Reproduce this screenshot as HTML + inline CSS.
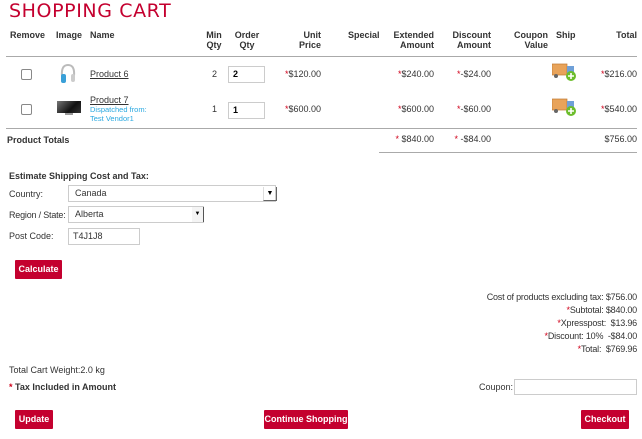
<!DOCTYPE html>
<html><head><style>
body{margin:0;width:642px;height:439px;background:#fff;font-family:"Liberation Sans",Arial,sans-serif;font-size:9px;color:#333;position:relative;overflow:hidden}
.a{position:absolute;white-space:nowrap}
.b{font-weight:bold}
.r{text-align:right}
.c{text-align:center}
.s{color:#d0021b}
.btn{position:absolute;background:#c4002f;color:#fff;font-weight:bold;font-size:9px;text-align:center;border-radius:1px}
.inp{position:absolute;border:1px solid #ccc;background:#fff;box-sizing:border-box;padding-left:4px;font-size:9px}
.cb{position:absolute;width:11px;height:11px;border:1px solid #888;border-radius:2px;box-sizing:border-box}
.line{position:absolute;height:1px;background:#aaa}
u{text-decoration:underline}
</style></head><body>
<div class="a" style="left:9px;top:0px;font-family:'DejaVu Sans',sans-serif;font-size:19px;color:#c4002f;letter-spacing:0.6px">SHOPPING CART</div>

<div class="a b" style="left:10px;top:30px">Remove</div>
<div class="a b" style="left:56px;top:30px">Image</div>
<div class="a b" style="left:90px;top:30px">Name</div>
<div class="a b c" style="left:200px;top:30px;width:28px;line-height:10px">Min<br>Qty</div>
<div class="a b c" style="left:228px;top:30px;width:38px;line-height:10px">Order<br>Qty</div>
<div class="a b r" style="left:280px;top:30px;width:41px;line-height:10px">Unit<br>Price</div>
<div class="a b" style="left:348px;top:30px">Special</div>
<div class="a b r" style="left:380px;top:30px;width:54px;line-height:10px">Extended<br>Amount</div>
<div class="a b r" style="left:440px;top:30px;width:51px;line-height:10px">Discount<br>Amount</div>
<div class="a b r" style="left:510px;top:30px;width:38px;line-height:10px">Coupon<br>Value</div>
<div class="a b" style="left:556px;top:30px">Ship</div>
<div class="a b r" style="left:600px;top:30px;width:37px">Total</div>
<div class="line" style="left:6px;top:56px;width:631px"></div>

<div class="cb" style="left:21px;top:69px"></div>
<svg class="a" style="left:58px;top:62px" width="20" height="24" viewBox="0 0 20 24"><path d="M4 14 Q3 3 10 3 Q17 3 16 14" fill="none" stroke="#bbb" stroke-width="2"/><rect x="3" y="12" width="5" height="9" rx="2" fill="#3aa0d8"/><rect x="13" y="12" width="4" height="8" rx="2" fill="#ccc"/></svg>
<div class="a" style="left:90px;top:69px"><u>Product 6</u></div>
<div class="a r" style="left:200px;top:69px;width:17px">2</div>
<div class="inp b" style="left:228px;top:66px;width:37px;height:17px;line-height:15px;color:#000">2</div>
<div class="a r" style="left:270px;top:69px;width:51px"><span class="s">*</span>$120.00</div>
<div class="a r" style="left:380px;top:69px;width:54px"><span class="s">*</span>$240.00</div>
<div class="a r" style="left:440px;top:69px;width:51px"><span class="s">*</span>-$24.00</div>
<svg class="a" style="left:552px;top:62px" width="26" height="20" viewBox="0 0 26 20"><rect x="0" y="2" width="15" height="11" fill="#e8a35a" stroke="#c07830" stroke-width=".7"/><rect x="15" y="4" width="7" height="9" fill="#6fa0d8"/><circle cx="4" cy="14" r="2" fill="#666"/><circle cx="19" cy="14" r="5" fill="#6cbd2c"/><path d="M19 11v6M16 14h6" stroke="#fff" stroke-width="1.6"/></svg>
<div class="a r" style="left:590px;top:69px;width:47px"><span class="s">*</span>$216.00</div>

<div class="cb" style="left:21px;top:104px"></div>
<div class="a" style="left:57px;top:101px;width:24px;height:12px;background:linear-gradient(135deg,#777,#111 60%,#333)"></div>
<div class="a" style="left:65px;top:113px;width:8px;height:2px;background:#999"></div>
<div class="a" style="left:90px;top:95px"><u>Product 7</u></div>
<div class="a" style="left:90px;top:105px;font-size:7.5px;color:#29a8e0;line-height:9px">Dispatched from:<br>Test Vendor1</div>
<div class="a r" style="left:200px;top:104px;width:17px">1</div>
<div class="inp b" style="left:228px;top:102px;width:37px;height:17px;line-height:15px;color:#000">1</div>
<div class="a r" style="left:270px;top:104px;width:51px"><span class="s">*</span>$600.00</div>
<div class="a r" style="left:380px;top:104px;width:54px"><span class="s">*</span>$600.00</div>
<div class="a r" style="left:440px;top:104px;width:51px"><span class="s">*</span>-$60.00</div>
<svg class="a" style="left:552px;top:97px" width="26" height="20" viewBox="0 0 26 20"><rect x="0" y="2" width="15" height="11" fill="#e8a35a" stroke="#c07830" stroke-width=".7"/><rect x="15" y="4" width="7" height="9" fill="#6fa0d8"/><circle cx="4" cy="14" r="2" fill="#666"/><circle cx="19" cy="14" r="5" fill="#6cbd2c"/><path d="M19 11v6M16 14h6" stroke="#fff" stroke-width="1.6"/></svg>
<div class="a r" style="left:590px;top:104px;width:47px"><span class="s">*</span>$540.00</div>
<div class="line" style="left:6px;top:128px;width:631px"></div>

<div class="a b" style="left:7px;top:135px">Product Totals</div>
<div class="a r" style="left:380px;top:134px;width:54px"><span class="s">*</span> $840.00</div>
<div class="a r" style="left:440px;top:134px;width:51px"><span class="s">*</span> -$84.00</div>
<div class="a r" style="left:590px;top:134px;width:47px">$756.00</div>
<div class="line" style="left:379px;top:152px;width:258px"></div>

<div class="a b" style="left:9px;top:171px">Estimate Shipping Cost and Tax:</div>
<div class="a" style="left:9px;top:189px">Country:</div>
<div class="inp" style="left:68px;top:185px;width:208px;height:17px;line-height:15px;padding-left:6px">Canada</div>
<div class="a" style="left:263px;top:187px;width:12px;height:13px;border-left:1px solid #ddd;font-size:7px;text-align:center;line-height:13px;color:#000;border-right:1px solid #666;border-bottom:1px solid #666">▼</div>
<div class="a" style="left:9px;top:210px;letter-spacing:-0.2px">Region / State:</div>
<div class="inp" style="left:68px;top:206px;width:136px;height:17px;line-height:15px;padding-left:6px">Alberta</div>
<div class="a" style="left:192px;top:207px;width:11px;height:15px;background:#f4f4f4;font-size:6px;text-align:center;line-height:15px;color:#000;border-right:1px solid #555">▼</div>
<div class="a" style="left:9px;top:231px">Post Code:</div>
<div class="inp" style="left:68px;top:228px;width:72px;height:17px;line-height:15px">T4J1J8</div>
<div class="btn" style="left:15px;top:260px;width:47px;height:19px;line-height:19px">Calculate</div>

<div class="a r" style="left:400px;top:291px;width:237px;line-height:13px;letter-spacing:-0.2px">Cost of products excluding tax: $756.00<br><span class="s">*</span>Subtotal: $840.00<br><span class="s">*</span>Xpresspost: &nbsp;$13.96<br><span class="s">*</span>Discount: 10% &nbsp;-$84.00<br><span class="s">*</span>Total: &nbsp;$769.96</div>

<div class="a" style="left:9px;top:365px">Total Cart Weight:2.0 kg</div>
<div class="a b" style="left:9px;top:382px"><span class="s">*</span> Tax Included in Amount</div>
<div class="a" style="left:479px;top:382px">Coupon:</div>
<div class="inp" style="left:514px;top:379px;width:123px;height:16px"></div>

<div class="btn" style="left:15px;top:410px;width:38px;height:19px;line-height:19px">Update</div>
<div class="btn" style="left:264px;top:410px;width:84px;height:19px;line-height:19px">Continue Shopping</div>
<div class="btn" style="left:581px;top:410px;width:48px;height:19px;line-height:19px">Checkout</div>
</body></html>
